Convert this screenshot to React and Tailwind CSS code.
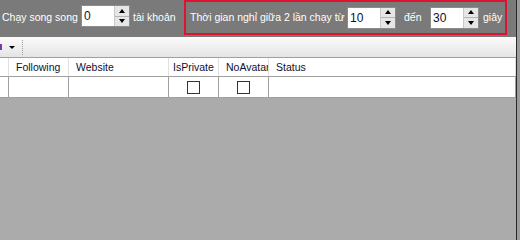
import React from 'react';

const font = { fontFamily: '"Liberation Sans", Arial, sans-serif' };

// Ô nhập số kiểu WinForms NumericUpDown
const SoLuong = ({ value, className = '' }) => (
  <div className={`flex h-[22px] w-[49px] shrink-0 border border-[#8c8c8c] bg-white ${className}`}>
    <div className="flex-1 pl-[2px] text-[12px] leading-[20px] text-[#101030]">{value}</div>
    <div className="flex w-[15px] flex-col border-l border-[#c8c8c8]">
      <div className="flex flex-1 items-center justify-center border-b border-[#b4b4b4] bg-[#e6e6e6]">
        <div className="h-0 w-0 border-x-[3px] border-b-[4px] border-x-transparent border-b-black" />
      </div>
      <div className="flex flex-1 items-center justify-center bg-[#e6e6e6]">
        <div className="h-0 w-0 border-x-[3px] border-t-[4px] border-x-transparent border-t-black" />
      </div>
    </div>
  </div>
);

const CheckBox = () => (
  <div className="flex h-full items-center justify-center">
    <div className="h-[13px] w-[13px] border border-[#333] bg-white" />
  </div>
);

const cot = [
  { ten: '', w: 'w-[9px]' },
  { ten: 'Following', w: 'w-[60px]' },
  { ten: 'Website', w: 'w-[100px]' },
  { ten: 'IsPrivate', w: 'w-[50px]', pl: 'pl-[4px]', check: true },
  { ten: 'NoAvatar', w: 'w-[50px]', check: true },
  { ten: 'Status', w: 'flex-1' },
];

export default function App() {
  return (
    <div className="flex h-[240px] w-[520px] overflow-hidden bg-[#ababab]" style={font}>
      <div className="flex w-[516px] shrink-0 flex-col">
        {/* Thanh cấu hình */}
        <div className="flex h-[37px] whitespace-nowrap bg-[#7a7a7a] text-[10.5px] text-white">
          <span className="ml-[2px] mt-[10px] w-[77px] shrink-0">Chạy song song</span>
          <SoLuong value="0" className="ml-[2px] mt-[5px]" />
          <span className="ml-[3px] mt-[10px] w-[46px] shrink-0">tài khoản</span>
          <div className="ml-[5px] flex h-[35px] w-[323px] shrink-0 items-center border-2 border-[#dc1430] pl-[4px]">
            <span className="w-[157px] shrink-0">Thời gian nghỉ giữa 2 lần chạy từ</span>
            <SoLuong value="10" />
            <span className="ml-[8px] w-[26px] shrink-0">đến</span>
            <SoLuong value="30" />
            <span className="ml-[4px]">giây</span>
          </div>
        </div>

        {/* Toolbar */}
        <div className="flex h-[21px] items-center border-b border-[#a0a0a0] bg-gradient-to-b from-[#fbfbfb] to-[#e4e4e4]">
          <div className="h-[6px] w-[2px] bg-[#7a3aa8]" />
          <div className="ml-[7px] h-0 w-0 border-x-[3px] border-t-[3px] border-x-transparent border-t-black" />
          <div className="ml-[7px] h-[15px] border-l border-dotted border-[#9a9a9a]" />
        </div>

        {/* Bảng dữ liệu */}
        <div className="flex h-[19px] border-b border-[#a0a0a0] bg-white text-[10.5px] text-[#101030]">
          {cot.map((c, i) => (
            <div
              key={i}
              className={`${c.w} ${c.pl || 'pl-[7px]'} shrink-0 overflow-hidden whitespace-nowrap border-r border-[#e0e0e0] leading-[18px]`}
            >
              {c.ten}
            </div>
          ))}
        </div>
        <div className="flex h-[21px] border-b border-[#a0a0a0] bg-white">
          {cot.map((c, i) => (
            <div key={i} className={`${c.w} shrink-0 border-r border-[#a0a0a0]`}>
              {c.check && <CheckBox />}
            </div>
          ))}
        </div>
      </div>
      <div className="w-px bg-[#2a2a2a]" />
      <div className="flex-1 bg-[#9c9c9c]" />
    </div>
  );
}
